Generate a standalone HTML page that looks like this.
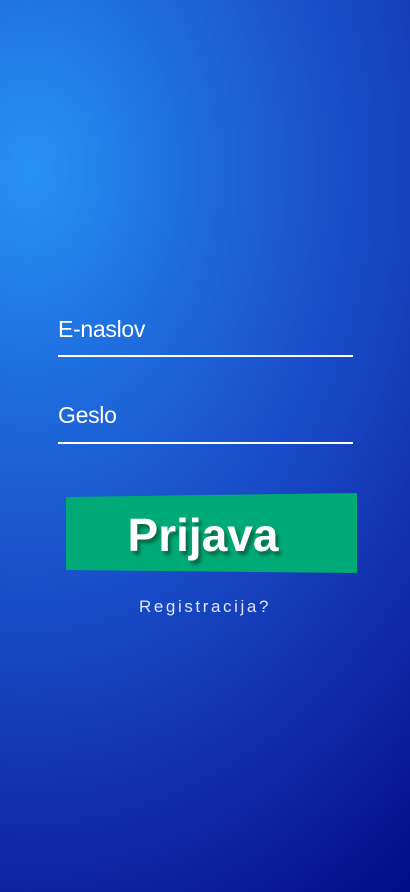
<!DOCTYPE html>
<html><head><meta charset="utf-8"><style>
html,body{margin:0;padding:0}
body{width:410px;height:892px;overflow:hidden;position:relative;font-family:"Liberation Sans",sans-serif;
background:radial-gradient(ellipse 650px 880px at 30px 170px,#2792f7 0%,#1e6cdd 25%,#194bc8 50%,#112ca8 75%,#030d86 100%);}
.lbl{position:absolute;left:58px;color:#fff;font-size:23px;font-weight:300;letter-spacing:-0.3px}
.line{position:absolute;left:58px;width:295px;height:2px;background:#fff}
.btn{position:absolute;left:66px;top:493px;width:291px;height:80px;background:#00aa76;
clip-path:polygon(0 4px,100% 0,100% 100%,0 77px)}
.bt{position:absolute;left:0;width:100%;top:508px;text-align:center;color:#fff;font-weight:bold;font-size:46px;
text-shadow:3px 4px 3px #0a6a48;}
.reg{position:absolute;left:0;width:410px;text-align:center;top:597px;color:#dfe6ff;font-size:17px;letter-spacing:2.6px}
</style></head><body>
<div class="lbl" style="top:316px">E-naslov</div>
<div class="line" style="top:355px"></div>
<div class="lbl" style="top:402px">Geslo</div>
<div class="line" style="top:442px"></div>
<div class="btn"></div>
<div class="bt" style="left:-2px">Prijava</div>
<div class="reg">Registracija?</div>
</body></html>
